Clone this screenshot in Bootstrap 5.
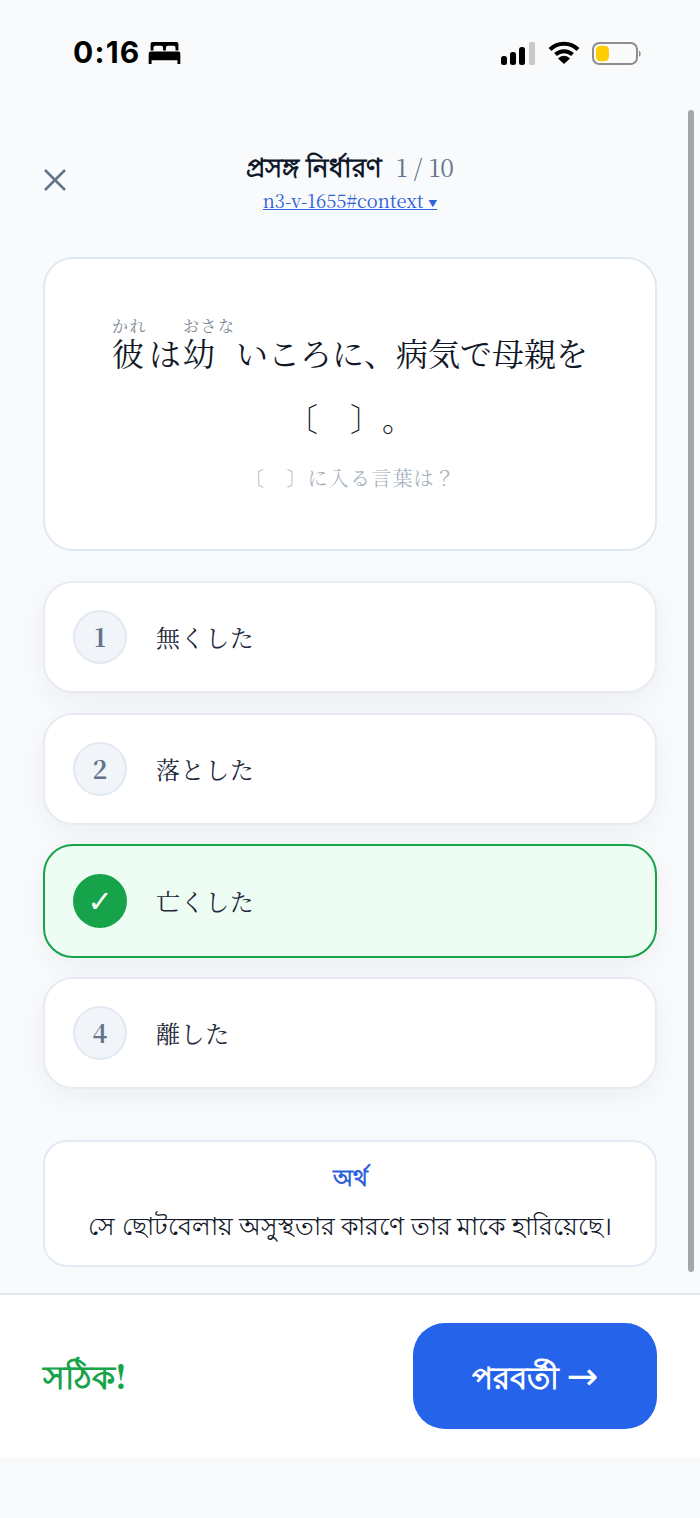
<!DOCTYPE html>
<html lang="ja">
<head>
<meta charset="utf-8">
<title>Quiz</title>
<link href="https://cdn.jsdelivr.net/npm/bootstrap@5.3.0/dist/css/bootstrap.min.css" rel="stylesheet">
<style>
html,body{height:100%;}
body{background:#f8fafc;font-family:"Noto Serif CJK JP","Liberation Serif","Noto Sans CJK JP",serif;color:#1e293b;width:700px;height:1518px;overflow:hidden;position:relative;text-spacing-trim:space-all;}
.status-strip{height:107px;padding:33px 58px 0 73px;}
.clock{font-family:Inter,"Liberation Sans",sans-serif;font-weight:700;font-size:30px;line-height:38px;color:#000;letter-spacing:1.2px;}
.status-right{padding-top:8px;}
.scroll-thumb{position:absolute;left:688px;top:110px;width:6px;height:1162px;border-radius:3px;background:#a3a6aa;}
.head-zone{height:150px;padding:0 43px;position:relative;}
.close-x{position:absolute;left:43px;top:61px;}
.head-title{padding-top:41px;line-height:36px;font-size:26px;font-weight:700;color:#0f172a;}
.head-count{font-weight:400;color:#64748b;font-size:24.5px;margin-left:8px;}
.ref-link{font-size:18.3px;line-height:24px;color:#2f62d6;text-decoration:underline;margin-top:3px;}
.ref-caret{font-size:9px;vertical-align:1px;}
.content-zone{padding:0 43px;}
.q-card{height:294px;background:#fff;border:2px solid #e2e8f0;border-radius:30px;padding-top:59px;}
.q-line{font-size:32px;line-height:66px;color:#111827;}
.rb-cell{display:inline-block;text-align:left;line-height:42px;}
.rb-first{margin-right:2px;}
.rb-wide{min-width:53px;margin-left:2px;}
.rb-top{display:block;font-size:16px;line-height:16px;color:#7b8794;letter-spacing:1.5px;margin-bottom:-3px;white-space:nowrap;}
.q-line-second{margin-top:-1px;}
.q-hint{font-size:20px;color:#a8b2bf;letter-spacing:1.2px;line-height:30px;margin-top:13px;}
.opt-list{margin-top:30px;gap:20px;}
.opt-row{height:112px;background:#fff;border:2px solid #e8ecf2;border-radius:30px;padding:0 28px;gap:29px;box-shadow:0 8px 28px rgba(15,23,42,.05);}
.opt-row.is-right{background:#eefdf4;border-color:#16a34a;height:114px;margin:-1px 0;}
.opt-num{width:54px;height:54px;border-radius:50%;background:#f1f5f9;border:2px solid #e2e8f0;color:#64748b;font-size:25px;font-weight:700;flex:none;}
.is-right .opt-num{background:#16a34a;border-color:#16a34a;color:#fff;font-family:"DejaVu Sans",sans-serif;font-size:30px;}
.opt-text{font-size:24px;letter-spacing:.6px;color:#1e293b;}
.mean-box{margin-top:51px;height:127px;background:#fff;border:2px solid #e2eaf4;border-radius:24px;padding-top:20px;}
.mean-label{font-size:23px;font-weight:700;color:#2f62d6;line-height:30px;}
.mean-text{font-size:25px;line-height:36px;color:#111827;margin-top:14px;}
.foot-zone{position:absolute;left:0;right:0;top:1293px;height:164px;background:#fff;border-top:2px solid #e2e8f0;padding:28px 43px 0;}
.right-msg{font-size:33px;font-weight:700;color:#16a34a;margin-bottom:30px;}
.next-btn{width:244px;height:106px;border-radius:32px;background:#2563eb;border:0;color:#fff;font-size:31px;font-weight:700;}
.next-btn:hover{background:#2563eb;color:#fff;}
.next-arrow{font-family:"DejaVu Sans",sans-serif;font-size:38px;font-weight:400;line-height:1;}
</style>
</head>
<body>
<div class="status-strip d-flex justify-content-between align-items-start">
  <div class="d-flex align-items-center gap-2">
    <span class="clock">0:16</span>
    <svg width="33" height="23" viewBox="0 0 33 24"><path d="M4 1h25a2 2 0 0 1 2 2v7h-3V7a2 2 0 0 0-2-2h-6a2 2 0 0 0-2 2v3h-3V7a2 2 0 0 0-2-2H7a2 2 0 0 0-2 2v3H2V3a2 2 0 0 1 2-2zM2 11h29a2 2 0 0 1 2 2v11h-3v-4H3v4H0V13a2 2 0 0 1 2-2z" fill="#000"/></svg>
  </div>
  <div class="status-right d-flex align-items-center gap-2">
    <svg width="36" height="23" viewBox="0 0 36 23"><rect x="1" y="14" width="6" height="9" rx="2.500" fill="#000"/><rect x="10" y="10" width="6" height="13" rx="2.500" fill="#000"/><rect x="19" y="5" width="6" height="18" rx="2.500" fill="#000"/><rect x="29" y="0" width="6" height="23" rx="1.500" fill="#c9c9c9"/></svg>
    <svg width="32" height="24" viewBox="0 0 32 24" class="ms-1"><path d="M2 8.500a20 20 0 0 1 28 0" fill="none" stroke="#000" stroke-width="4"/><path d="M7.500 13.500a12.500 12.500 0 0 1 17 0" fill="none" stroke="#000" stroke-width="4"/><path d="M16 23l-6-5.500a8 8 0 0 1 12 0z" fill="#000"/></svg>
    <svg width="50" height="23" viewBox="0 0 50 24" preserveAspectRatio="none" class="ms-1"><rect x="1" y="1" width="44" height="22" rx="6.500" fill="#fafafa" stroke="#8e8e8e" stroke-width="2"/><rect x="4" y="4" width="13" height="16" rx="4.500" fill="#ffcc00"/><path d="M47 9c2 .5 2.500 5.500 0 6z" fill="#8e8e8e"/></svg>
  </div>
</div>
<div class="scroll-thumb"></div>
<div class="head-zone text-center">
  <button class="close-x btn p-0 border-0" aria-label="close"><svg width="24" height="24" viewBox="0 0 24 24" class="d-block"><path d="M2 2l20 20M22 2L2 22" stroke="#64748b" stroke-width="2.500" fill="none"/></svg></button>
  <div class="head-title">প্রসঙ্গ নির্ধারণ <span class="head-count">1 / 10</span></div>
  <div class="ref-link">n3-v-1655#context <span class="ref-caret">▼</span></div>
</div>
<div class="content-zone">
  <div class="q-card text-center">
    <div class="q-line"><span class="rb-cell rb-first"><span class="rb-top">かれ</span>彼</span>は<span class="rb-cell rb-wide"><span class="rb-top">おさな</span>幼</span>いころに、病気で母親を</div>
    <div class="q-line q-line-second">〔　〕。</div>
    <div class="q-hint">〔　〕に入る言葉は？</div>
  </div>
  <div class="opt-list d-flex flex-column">
    <div class="opt-row d-flex align-items-center"><span class="opt-num d-flex align-items-center justify-content-center">1</span><span class="opt-text">無くした</span></div>
    <div class="opt-row d-flex align-items-center"><span class="opt-num d-flex align-items-center justify-content-center">2</span><span class="opt-text">落とした</span></div>
    <div class="opt-row is-right d-flex align-items-center"><span class="opt-num d-flex align-items-center justify-content-center">✓</span><span class="opt-text">亡くした</span></div>
    <div class="opt-row d-flex align-items-center"><span class="opt-num d-flex align-items-center justify-content-center">4</span><span class="opt-text">離した</span></div>
  </div>
  <div class="mean-box text-center">
    <div class="mean-label">অর্থ</div>
    <div class="mean-text">সে ছোটবেলায় অসুস্থতার কারণে তার মাকে হারিয়েছে।</div>
  </div>
</div>
<div class="foot-zone d-flex justify-content-between align-items-start">
  <span class="right-msg align-self-center">সঠিক!</span>
  <button class="next-btn btn">পরবর্তী <span class="next-arrow">→</span></button>
</div>
<script src="https://cdn.jsdelivr.net/npm/bootstrap@5.3.0/dist/js/bootstrap.bundle.min.js"></script>
</body>
</html>
